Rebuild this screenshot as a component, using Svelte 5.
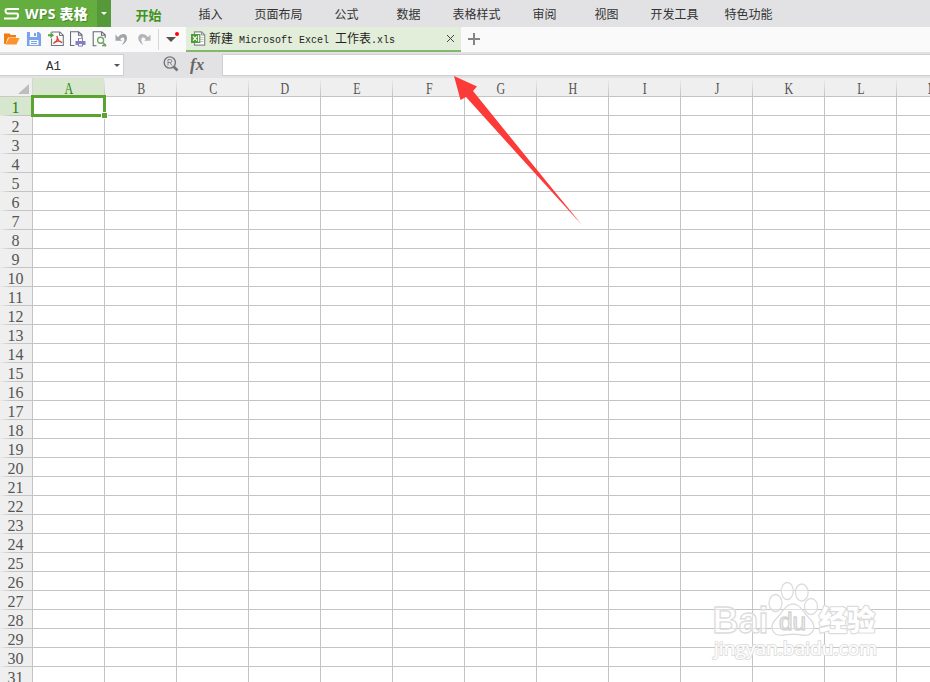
<script>
  const menus = ['插入', '页面布局', '公式', '数据', '表格样式', '审阅', '视图', '开发工具', '特色功能'];
  const cols = 'ABCDEFGHIJKLM'.split('');
  const rows = Array.from({ length: 31 }, (_, i) => i + 1);
</script>

<div class="app">
  <header class="menubar">
    <div class="brand">
      <svg width="16" height="14" viewBox="0 0 16 14"><path d="M15 2H3.2Q1.5 2 1.5 4T3.2 6.5H12.6Q14 6.5 14 8.7T12.5 11.5H0" fill="none" stroke="#fff" stroke-width="2.1" /></svg>
      <span>WPS <b>表格</b></span>
    </div>
    <div class="brand-drop"><i class="caret white"></i></div>
    <nav>
      <span class="menu active">开始</span>
      {#each menus as m}<span class="menu" class:wide={m.length > 2}>{m}</span>{/each}
    </nav>
  </header>

  <div class="toolbar">
    <div class="tools">
      <svg viewBox="0 0 16 16"><path d="M0 13V2.5h5.5L7 4h5v2.5H4L1.5 13z" fill="#ef7d14" /><path d="M5 7h10.5l-3 6.5H1.5z" fill="#fd922b" /></svg>
      <svg viewBox="0 0 16 16"><path d="M1.8 1.8h10.8l1.6 1.7v10.7H1.8z" fill="#7ba3ea" stroke="#7ba3ea" stroke-width="1.7" /><path d="M4 1h7v5H4zM3.5 9h9v5h-9z" fill="#fafafa" /><path d="M8 2h2v3H8zM5 10h6v1H5zM5 12h6v1H5z" fill="#7ba3ea" /></svg>
      <svg viewBox="0 0 16 16"><path d="M3.5 7.5v7h11.8V4.2L11.8 1H4v1" fill="none" stroke="#707780" stroke-width="1.1" /><path d="M11.5 1v3.5H15" fill="none" stroke="#707780" /><path d="M0 3.2h2.5V1L6 4.2 2.5 7.3V5.2H0z" fill="#55a33d" /><path d="M9 5c1 3-1 6-3.5 7.5C7 10 11 9.3 14 11.5 11 11 9.5 8 9 5z" fill="none" stroke="#e04038" stroke-width="1.3" /></svg>
      <svg viewBox="0 0 16 16"><path d="M4.5 14.5h-4V.8h8l3.5 3V7M8.5.8v3.5H12" fill="none" stroke="#666c76" stroke-width="1.1" /><path d="M8 7h5v3h2.5v4H13v1.5H8V14H5.5v-4H8z" fill="#8580bd" /><path d="M9 7.8h3V10H9zM9 13h3v1.5H9z" fill="#fff" /></svg>
      <svg viewBox="0 0 16 16"><path d="M4.5 14.8H1.2V.8h8.5l3.5 3V7M9.5.8v3.5H13M13.2 13v1.8H10" fill="none" stroke="#666c76" stroke-width="1.1" /><circle cx="8.6" cy="9.3" r="3" fill="#fff" stroke="#72a765" stroke-width="1.4" /><path d="M11 12l3 3" stroke="#72a765" stroke-width="2" /></svg>
      <svg viewBox="0 0 16 16"><path d="M4 6.3C8 .8 13.8 3 13 8c-.5 2.3-2 4.5-5 6 1.3-2.3 2.8-4.3 2.3-6.2-.5-2-2.9-1.7-4.1.4L8.2 9.8H1.5V3.5z" fill="#a1a4a9" /></svg>
      <svg viewBox="0 0 16 16"><path d="M12 6.3C8 .8 1.5 3 2.3 8c.5 2.3 2 4.5 5 6-1.5-2.3-2.3-4.3-1.8-6.2.5-2 2.9-1.7 4.3.4L8.2 9.8h6.3V3.5z" fill="#b2b5b9" /></svg>
    </div>
    <div class="more"><i class="caret big"></i><i class="dot"></i></div>
    <div class="doctab">
      <svg width="15" height="15" viewBox="0 0 15 15"><path d="M3.5 3V.8h7l3.2 3v10.4H3.5V12" fill="#fff" stroke="#858a93" stroke-width="1.2" /><path d="M10.4 1v3h3" fill="none" stroke="#858a93" /><path d="M9.5 6.5h3M9.5 8.5h3M9.5 10.5h3" stroke="#bac5bd" /><path d="M.6 3.6h8.2v7.8H.6z" fill="#fff" stroke="#529a3d" stroke-width="1.2" /><path d="M1 4h6v7H1z" fill="#529a3d" /><path d="M2 5.3l4 4.4M6 5.3L2 9.7" stroke="#fff" stroke-width="1.2" /></svg>
      <span class="doctitle">新建<em class="mid">Microsoft Excel</em>工作表<em>.xls</em></span>
      <svg class="close" width="9" height="9" viewBox="0 0 9 9"><path d="M1 1l7 7M8 1L1 8" stroke="#444" stroke-width="1" /></svg>
    </div>
    <svg class="plus" width="12" height="12" viewBox="0 0 12 12"><path d="M0 6h12M6 0v12" stroke="#858585" stroke-width="2" /></svg>
  </div>

  <div class="formula">
    <div class="namebox"><span>A1</span><i class="caret"></i></div>
    <div class="fxarea">
      <svg width="16" height="16" viewBox="0 0 16 16"><circle cx="6.8" cy="6.5" r="5.6" fill="none" stroke="#727477" stroke-width="1.4" /><path d="M10.5 10.5l4 4" stroke="#727477" stroke-width="2.6" /><path d="M5 9.5v-6h2.3q1.5 0 1.5 1.5T7.3 6.5H5M7 6.5l2 3" fill="none" stroke="#85878a" /></svg>
      <span class="fx">fx</span>
    </div>
    <div class="input"></div>
  </div>

  <main class="sheet">
    <div class="row head">
      <div class="corner"><svg width="11" height="10"><path d="M11 0v10H0z" fill="#bdbdbd" /></svg></div>
      {#each cols as c, i}<div class="colhead" class:sel={i === 0}><span>{c}</span></div>{/each}
    </div>
    {#each rows as r}
      <div class="row">
        <div class="rowhead" class:sel={r === 1}>{r}</div>
        {#each cols as c}<div class="cell"></div>{/each}
      </div>
    {/each}
    <div class="selection"><i></i></div>
  </main>

  <svg class="overlay" width="930" height="682" viewBox="0 0 930 682">
    <path d="M454 76L477 86.5L473 91L522 151.5L582 225L517 153.5L466 97L460.5 100z" fill="#fc3a38" />
    <g class="mark">
      <text x="712.5" y="633" font-size="36" font-weight="700" textLength="56" lengthAdjust="spacingAndGlyphs">Bai</text>
      <ellipse cx="775.5" cy="603" rx="6.5" ry="8.5" />
      <ellipse cx="787.3" cy="591" rx="6" ry="8.5" />
      <ellipse cx="801.8" cy="592.5" rx="6.3" ry="8.5" />
      <ellipse cx="811" cy="606.5" rx="6.5" ry="8" />
      <path d="M793 604C801 604 804 614 811 620C818 629 811 637 802 635C796 634 790 634 784 635C773 637 768 627 776 619C783 612 785 604 793 604z" />
      <text class="du" x="779" y="629.5" font-size="23" textLength="27" lengthAdjust="spacingAndGlyphs">du</text>
      <text class="cjk" x="819" y="631" font-size="28" font-weight="900" textLength="56" lengthAdjust="spacingAndGlyphs">经验</text>
      <text class="url" x="714" y="655" font-size="19" textLength="163" lengthAdjust="spacingAndGlyphs">jingyan.baidu.com</text>
    </g>
  </svg>
</div>

<style>
  :global(body) { margin: 0; overflow: hidden; }
  .app { position: relative; width: 930px; height: 682px; overflow: hidden; background: #fff; color: #333; font: 12px "Liberation Sans", "Noto Sans CJK SC", sans-serif; display: flex; flex-direction: column; }
  .app * { box-sizing: border-box; }
  svg { display: block; flex: none; }
  .menubar { display: flex; height: 27px; flex: none; background: #e2e2e4; }
  .brand { width: 97px; display: flex; align-items: center; gap: 5px; padding-left: 4px; background: #64ad3f; color: #fff; font: bold 14px/27px "Noto Sans", "Noto Sans CJK SC", sans-serif; white-space: nowrap; text-shadow: 1px 1px 0 #4c852f; }
  .brand span { font-size: 14px; letter-spacing: .25px; }
  .brand-drop { width: 14px; background: #56993a; display: flex; align-items: center; justify-content: center; }
  .caret { width: 0; height: 0; border: 3px solid transparent; border-top-color: #555; border-bottom: 0; }
  .caret.white { border-top-color: #fff; }
  .caret.big { display: block; border-width: 5px 5px 0; }
  nav { display: flex; margin-left: 6.5px; }
  .menu { width: 62px; text-align: center; line-height: 31px; height: 27px; }
  .menu.wide { width: 74px; }
  .menu.active { color: #3e9420; font-weight: bold; font-size: 13px; }
  .toolbar { display: flex; height: 25px; flex: none; background: #fafafa; }
  .tools { width: 159px; display: flex; align-items: center; gap: 6px; padding: 0 0 2px 4px; border-right: 1px solid #d7d7d7; height: 21px; margin-top: 2px; }
  .tools svg { width: 16px; height: 16px; }
  .more { width: 27px; position: relative; padding: 10px 0 0 7px; }
  .dot { position: absolute; left: 16px; top: 5px; width: 4px; height: 4px; border-radius: 50%; background: #f00; }
  .doctab { width: 275px; display: flex; align-items: center; padding: 0 6px 0 5px; background: #e2eed9; border-bottom: 2px solid #83b96d; }
  .doctitle { margin-left: 3px; line-height: 24px; height: 23px; white-space: nowrap; color: #222; }
  em { font: 10px "Liberation Mono", monospace; }
  .mid { margin: 0 6px; }
  .close { margin-left: auto; }
  .plus { margin: 6px 0 0 7px; }
  .formula { display: flex; height: 26px; flex: none; background: #e2e2e4; padding: 2px 0; }
  .namebox { width: 124px; display: flex; align-items: center; background: #fff; border: 1px solid #cfcfd3; border-left: 0; padding: 0 3px 0 46px; justify-content: space-between; font: 12.5px "Liberation Mono", monospace; }
  .namebox span { padding-top: 3px; }
  .fxarea { width: 98px; display: flex; padding: 1px 0 0 39px; gap: 11px; }
  .fxarea svg { margin-top: 1px; }
  .fx { font: italic bold 17px/19px "Liberation Serif", serif; color: #666; }
  .input { flex: 1; background: #fff; border: 1px solid #cfcfd3; border-right: 0; }
  .sheet { position: relative; flex: 1; overflow: hidden; }
  .row { display: flex; height: 19px; width: 970px; }
  .corner, .rowhead { width: 33px; flex: none; background: #efefef; border-right: 1px solid #c4c4c4; border-bottom: 1px solid #c9c9c9; }
  .corner { padding: 6px 0 0 18px; border-right-color: #d6d6d6; }
  .rowhead { padding-right: 1px; text-align: center; font: 16px/22px "Liberation Serif", serif; color: #555; border-image: linear-gradient(90deg, #efefef, #c4c4c4 35%) 1; }
  .colhead { width: 72px; flex: none; text-align: center; background: linear-gradient(#efefef, #c4c4c4) right / 1px 100% no-repeat #efefef; border-bottom: 1px solid #c4c4c4; font: 16px/22px "Liberation Serif", serif; color: #555; }
  .colhead span { display: inline-block; transform: scaleX(.75); }
  .colhead.sel, .rowhead.sel { background-color: #d7e7ce; color: #25830b; }
  .cell { width: 72px; flex: none; border-right: 1px solid #c4c4c4; border-bottom: 1px solid #c4c4c4; }
  .selection { position: absolute; left: 31px; top: 17px; width: 75px; height: 22px; border: 3px solid #5ba432; }
  .selection i { position: absolute; right: -5px; bottom: -5px; width: 7px; height: 7px; background: #5ba432; border: 1px solid #fff; }
  .overlay { position: absolute; left: 0; top: 0; pointer-events: none; }
  .mark { fill: rgba(255,255,255,.45); stroke: #dcdcdc; stroke-width: 1.3; stroke-linejoin: round; font-family: "Liberation Sans", "Noto Sans CJK SC", sans-serif; }
  .mark .du { stroke: #d2d2d2; }
  .mark .url { fill: #fff; stroke: #dfdfdf; stroke-width: 2; paint-order: stroke; font-family: "Open Sans", sans-serif; }
  .mark .cjk { fill: #fff; stroke: #dcdcdc; stroke-width: 2.4; paint-order: stroke; }
</style>
